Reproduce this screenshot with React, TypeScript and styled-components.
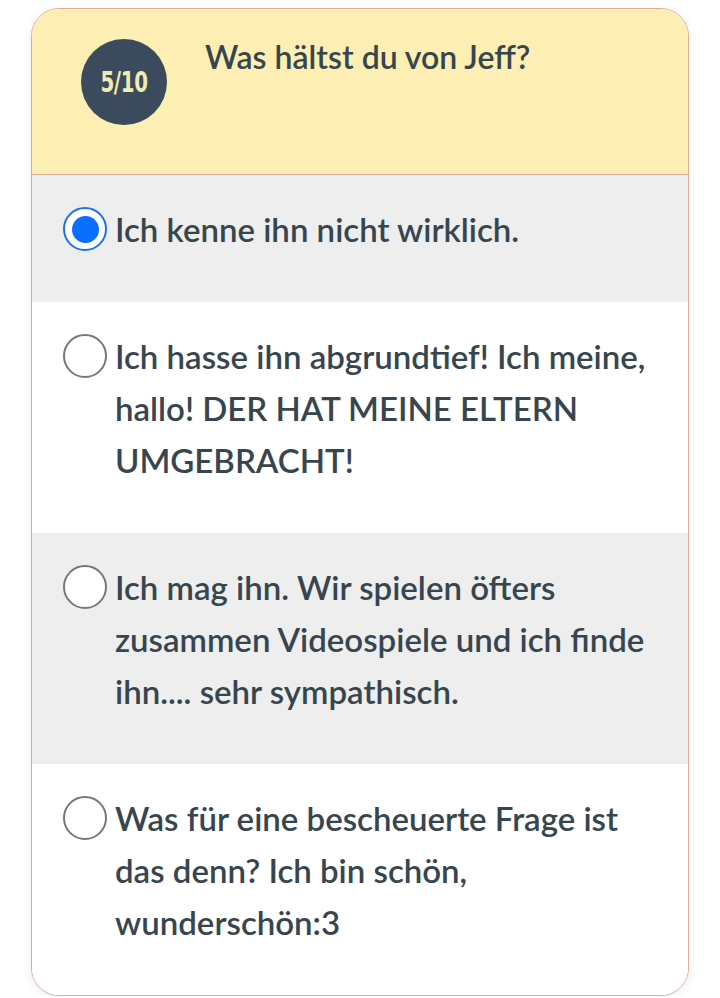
import React from 'react';
import styled, { createGlobalStyle } from 'styled-components';

const GlobalStyle = createGlobalStyle`
  html, body {
    margin: 0;
    padding: 0;
    background: #ffffff;
  }
  body {
    font-family: Lato, "Open Sans", "Noto Sans", sans-serif;
  }
`;

const Page = styled.div`
  padding-top: 8px;
  display: flex;
  justify-content: center;
`;

const Card = styled.div`
  width: 658px;
  box-sizing: border-box;
  border: 1px solid #dcae95;
  border-radius: 28px;
  overflow: hidden;
  background: #ffffff;
  box-shadow: 0 2px 8px rgba(120, 130, 160, 0.15);
`;

const Header = styled.div`
  height: 166px;
  box-sizing: border-box;
  background: #fdefb3;
  border-bottom: 1px solid #dcae95;
  display: flex;
  align-items: flex-start;
  padding: 30px 30px 0 49px;
  gap: 38px;
`;

const Badge = styled.div`
  flex: 0 0 86px;
  height: 86px;
  border-radius: 50%;
  background: #3b4a5c;
  color: #f1edb0;
  display: flex;
  align-items: center;
  justify-content: center;
  font-family: "DejaVu Sans Condensed", "Liberation Sans Narrow", sans-serif;
  font-weight: 700;
  font-size: 29px;
`;

const BadgeLabel = styled.span`
  display: inline-block;
  transform: scaleX(0.76);
  letter-spacing: -0.5px;
`;

const Question = styled.div`
  font-size: 32px;
  font-weight: 600;
  color: #37454f;
  line-height: 36px;
`;

const Option = styled.label<{ $shade: boolean }>`
  display: flex;
  align-items: flex-start;
  gap: 8px;
  padding: 28px 30px 47px 31px;
  background: ${(p) => (p.$shade ? '#eeeeee' : '#ffffff')};
  cursor: pointer;
`;

const Radio = styled.span<{ $checked: boolean }>`
  flex: 0 0 auto;
  width: 44px;
  height: 44px;
  margin-top: 4px;
  box-sizing: border-box;
  border-radius: 50%;
  border: ${(p) => (p.$checked ? '2px solid #1a73e8' : '2px solid #777777')};
  background: #ffffff;
  display: flex;
  align-items: center;
  justify-content: center;
  &::after {
    content: '';
    display: ${(p) => (p.$checked ? 'block' : 'none')};
    width: 27px;
    height: 27px;
    border-radius: 50%;
    background: #0b6efd;
  }
`;

const OptionText = styled.span`
  font-size: 33px;
  font-weight: 600;
  line-height: 52px;
  color: #37454f;
`;

const options = [
  'Ich kenne ihn nicht wirklich.',
  'Ich hasse ihn abgrundtief! Ich meine, hallo! DER HAT MEINE ELTERN UMGEBRACHT!',
  'Ich mag ihn. Wir spielen öfters zusammen Videospiele und ich finde ihn.... sehr sympathisch.',
  'Was für eine bescheuerte Frage ist das denn? Ich bin schön, wunderschön:3',
];

export default function App() {
  const selected = 0;
  return (
    <>
      <GlobalStyle />
      <Page>
        <Card>
          <Header>
            <Badge>
              <BadgeLabel>5/10</BadgeLabel>
            </Badge>
            <Question>Was hältst du von Jeff?</Question>
          </Header>
          {options.map((text, i) => (
            <Option key={i} $shade={i % 2 === 0}>
              <Radio $checked={i === selected} />
              <OptionText>{text}</OptionText>
            </Option>
          ))}
        </Card>
      </Page>
    </>
  );
}
